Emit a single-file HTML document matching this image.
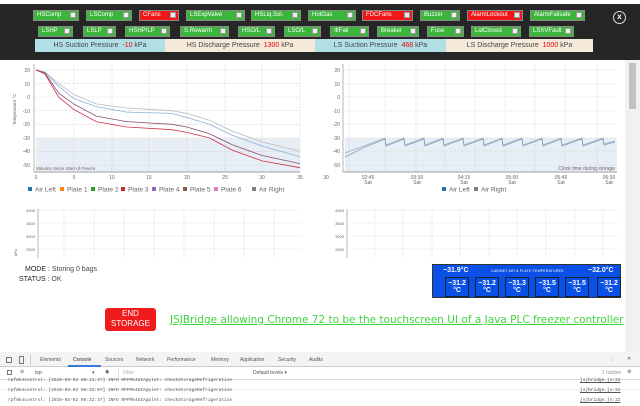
<!DOCTYPE html>
<html><head><meta charset="utf-8"><style>
*{margin:0;padding:0;box-sizing:border-box}
body{width:640px;height:400px;overflow:hidden;background:#fff;font-family:"Liberation Sans",sans-serif;position:relative}
.top{position:absolute;left:0;top:4px;width:640px;height:56px;background:#262626}
.b{position:absolute;height:11px;background:#3cb53c;border:1px solid #888;color:#fff;font-size:6px;line-height:9px;padding-left:3px}
.b.r{background:#f01818}
.b i{position:absolute;right:2px;top:1px;width:6px;height:6px;background:#eee;border:1px solid #999}
.p{position:absolute;top:39px;height:13px;font-size:7px;line-height:13px;text-align:center;color:#444}
.p b{color:#e00;font-weight:normal}
.abs{position:absolute}
.dt{font-size:5px;color:#555}
</style></head><body>
<div class="top"></div>
<div class="abs" style="left:613px;top:11px;width:13px;height:13px;border:1.5px solid #ddd;border-radius:50%;color:#fff;font-size:8px;text-align:center;line-height:10px;font-weight:bold">x</div>
<div class="b" style="left:33px;top:10px;width:46px">HSComp<i></i></div>
<div class="b" style="left:86px;top:10px;width:46px">LSComp<i></i></div>
<div class="b r" style="left:139px;top:10px;width:40px">CFans<i></i></div>
<div class="b" style="left:186px;top:10px;width:59px">LSExpValve<i></i></div>
<div class="b" style="left:251px;top:10px;width:50px">HSLiq.Sol.<i></i></div>
<div class="b" style="left:308px;top:10px;width:48px">HotGas<i></i></div>
<div class="b r" style="left:362px;top:10px;width:51px">FDCFans<i></i></div>
<div class="b" style="left:420px;top:10px;width:40px">Buzzer<i></i></div>
<div class="b r" style="left:467px;top:10px;width:56px">AlarmLockout<i></i></div>
<div class="b" style="left:530px;top:10px;width:55px">AlarmFailsafe<i></i></div>
<div class="b" style="left:38px;top:26px;width:35px">LSHP<i></i></div>
<div class="b" style="left:83px;top:26px;width:33px">LSLP<i></i></div>
<div class="b" style="left:125px;top:26px;width:45px">HSHP/LP<i></i></div>
<div class="b" style="left:180px;top:26px;width:49px">S.Rewarm<i></i></div>
<div class="b" style="left:238px;top:26px;width:37px">HSO/L<i></i></div>
<div class="b" style="left:284px;top:26px;width:37px">LSO/L<i></i></div>
<div class="b" style="left:330px;top:26px;width:39px">ΦFail<i></i></div>
<div class="b" style="left:377px;top:26px;width:42px">Breaker<i></i></div>
<div class="b" style="left:427px;top:26px;width:37px">Fuse<i></i></div>
<div class="b" style="left:471px;top:26px;width:50px">LidClosed<i></i></div>
<div class="b" style="left:529px;top:26px;width:45px">LSXVFault<i></i></div>
<div class="p" style="left:35px;width:130px;background:#b0e0e6">HS Suction Pressure &nbsp;<b>-10</b> kPa</div>
<div class="p" style="left:165px;width:150px;background:#f5e9da">HS Discharge Pressure &nbsp;<b>1300</b> kPa</div>
<div class="p" style="left:315px;width:131px;background:#b0e0e6">LS Suction Pressure &nbsp;<b>468</b> kPa</div>
<div class="p" style="left:446px;width:147px;background:#f5e9da">LS Discharge Pressure &nbsp;<b>1000</b> kPa</div>

<svg class="abs" style="left:0;top:60px" width="640" height="200" viewBox="0 60 640 200" font-family="Liberation Sans" font-size="5" fill="#666">
<rect x="36" y="138" width="264" height="34" fill="#e8eef6"/>
<g stroke="#ccc" stroke-dasharray="1,1" stroke-width="0.6">
<line x1="36" y1="70" x2="300" y2="70"/><line x1="36" y1="83.6" x2="300" y2="83.6"/><line x1="36" y1="97" x2="300" y2="97"/><line x1="36" y1="110.7" x2="300" y2="110.7"/><line x1="36" y1="124.3" x2="300" y2="124.3"/><line x1="36" y1="138" x2="300" y2="138"/><line x1="36" y1="151.4" x2="300" y2="151.4"/><line x1="36" y1="165" x2="300" y2="165"/>
<line x1="74" y1="64" x2="74" y2="172"/><line x1="112" y1="64" x2="112" y2="172"/><line x1="149" y1="64" x2="149" y2="172"/><line x1="187" y1="64" x2="187" y2="172"/><line x1="225" y1="64" x2="225" y2="172"/><line x1="262" y1="64" x2="262" y2="172"/><line x1="300" y1="64" x2="300" y2="172"/>
</g>
<line x1="34" y1="64" x2="34" y2="172" stroke="#999" stroke-width="0.7"/>
<line x1="34" y1="172" x2="300" y2="172" stroke="#bbb" stroke-width="1.5"/>
<g text-anchor="end"><text x="30" y="72">20</text><text x="30" y="86">10</text><text x="30" y="99">0</text><text x="30" y="113">-10</text><text x="30" y="126">-20</text><text x="30" y="140">-30</text><text x="30" y="153">-40</text><text x="30" y="167">-50</text></g>
<g text-anchor="middle"><text x="36" y="179">0</text><text x="74" y="179">5</text><text x="112" y="179">10</text><text x="149" y="179">15</text><text x="187" y="179">20</text><text x="225" y="179">25</text><text x="262" y="179">30</text><text x="300" y="179">35</text><text x="326" y="179">30</text></g>
<text x="36" y="170" font-size="4.5">Minutes Since Start of Freeze</text>
<text transform="translate(16,125) rotate(-90)" font-size="4.5">Temperature °C</text>
<g fill="none" stroke-width="0.8">
<polyline stroke="#bbb" points="36,70 45,72 58.6,83.6 73.7,94.4 96.3,103.9 126.5,108 171.7,110.7 186.8,113.4 209.4,120.2 232,131.1 262.2,141.9 299.9,151.4"/>
<polyline stroke="#8ab0d8" points="36,70 45,72 58.6,86.3 73.7,98.5 96.3,106.6 126.5,112.1 171.7,113.4 186.8,117.5 209.4,124.3 232,135.1 262.2,146 299.9,156.8"/>
<polyline stroke="#8a5070" points="36,70 45,73 58.6,93.1 73.7,103.9 96.3,116.1 126.5,121.6 171.7,124.3 186.8,127 209.4,133.8 232,144.6 262.2,155.5 299.9,163.6"/>
<polyline stroke="#d0304a" points="36,70 45,74 58.6,97.1 73.7,109.4 96.3,121.6 126.5,127 171.7,129.7 186.8,132.4 209.4,137.9 232,150 262.2,160.9 299.9,167.7"/>
</g>
<g font-size="6.6">
<rect x="28" y="187" width="4" height="4" fill="#1f77b4"/><text x="35" y="191.5">Air Left</text>
<rect x="60" y="187" width="4" height="4" fill="#ff7f0e"/><text x="67" y="191.5">Plate 1</text>
<rect x="91" y="187" width="4" height="4" fill="#2ca02c"/><text x="98" y="191.5">Plate 2</text>
<rect x="121" y="187" width="4" height="4" fill="#d62728"/><text x="128" y="191.5">Plate 3</text>
<rect x="152" y="187" width="4" height="4" fill="#9467bd"/><text x="159" y="191.5">Plate 4</text>
<rect x="183" y="187" width="4" height="4" fill="#8c564b"/><text x="190" y="191.5">Plate 5</text>
<rect x="214" y="187" width="4" height="4" fill="#e377c2"/><text x="221" y="191.5">Plate 6</text>
<rect x="252" y="187" width="4" height="4" fill="#7f7f7f"/><text x="259" y="191.5">Air Right</text>
<rect x="442" y="187" width="4" height="4" fill="#1f77b4"/><text x="449" y="191.5">Air Left</text>
<rect x="474" y="187" width="4" height="4" fill="#7f7f7f"/><text x="481" y="191.5">Air Right</text>
</g>
<rect x="345" y="138" width="272" height="34" fill="#e8eef6"/>
<g stroke="#ccc" stroke-dasharray="1,1" stroke-width="0.6">
<line x1="345" y1="70" x2="617" y2="70"/><line x1="345" y1="84" x2="617" y2="84"/><line x1="345" y1="97" x2="617" y2="97"/><line x1="345" y1="111" x2="617" y2="111"/><line x1="345" y1="124" x2="617" y2="124"/><line x1="345" y1="138" x2="617" y2="138"/><line x1="345" y1="151" x2="617" y2="151"/><line x1="345" y1="165" x2="617" y2="165"/>
<line x1="349" y1="64" x2="349" y2="172"/><line x1="385" y1="64" x2="385" y2="172"/><line x1="416" y1="64" x2="416" y2="172"/><line x1="445" y1="64" x2="445" y2="172"/><line x1="475" y1="64" x2="475" y2="172"/><line x1="505" y1="64" x2="505" y2="172"/><line x1="535" y1="64" x2="535" y2="172"/><line x1="565" y1="64" x2="565" y2="172"/><line x1="597" y1="64" x2="597" y2="172"/>
</g>
<line x1="343" y1="64" x2="343" y2="172" stroke="#999" stroke-width="0.7"/>
<line x1="343" y1="172" x2="617" y2="172" stroke="#bbb" stroke-width="1.5"/>
<g text-anchor="end"><text x="340" y="72">20</text><text x="340" y="86">10</text><text x="340" y="99">0</text><text x="340" y="113">-10</text><text x="340" y="126">-20</text><text x="340" y="140">-30</text><text x="340" y="153">-40</text><text x="340" y="167">-50</text></g>
<g text-anchor="middle"><text x="368" y="179">02:45</text><text x="368" y="184">Sat</text><text x="417" y="179">03:30</text><text x="417" y="184">Sat</text><text x="464" y="179">04:15</text><text x="464" y="184">Sat</text><text x="512" y="179">05:00</text><text x="512" y="184">Sat</text><text x="561" y="179">05:45</text><text x="561" y="184">Sat</text><text x="609" y="179">06:30</text><text x="609" y="184">Sat</text></g>
<text x="615" y="170" text-anchor="end">Clock time during storage</text>
<g fill="none" stroke-width="0.8">
<polyline stroke="#aaa" points="345,153 385,138 386,145 404,138 405,145 424,138 425,145 443,138 444,145 463,138 464,145 483,138 484,145 502,138 503,145 522,138 523,145 542,138 543,145 561,138 562,145 582,138 583,145 603,138 604,144 615,141"/>
<polyline stroke="#7aa0cc" points="345,157 365,147 385,139 386,146 404,139 405,146 424,139 425,146 443,139 444,146 463,139 464,146 483,139 484,146 502,139 503,146 522,139 523,146 542,139 543,146 561,139 562,146 582,139 583,146 603,139 604,145 615,142"/>
</g>
<g stroke="#ccc" stroke-dasharray="1,1" stroke-width="0.6">
<line x1="39" y1="210" x2="300" y2="210"/><line x1="39" y1="223" x2="300" y2="223"/><line x1="39" y1="236" x2="300" y2="236"/><line x1="39" y1="249" x2="300" y2="249"/>
<line x1="350" y1="210" x2="617" y2="210"/><line x1="350" y1="223" x2="617" y2="223"/><line x1="350" y1="236" x2="617" y2="236"/><line x1="350" y1="249" x2="617" y2="249"/>
<line x1="64" y1="210" x2="64" y2="258"/><line x1="94" y1="210" x2="94" y2="258"/><line x1="124" y1="210" x2="124" y2="258"/><line x1="154" y1="210" x2="154" y2="258"/><line x1="184" y1="210" x2="184" y2="258"/><line x1="214" y1="210" x2="214" y2="258"/><line x1="244" y1="210" x2="244" y2="258"/><line x1="274" y1="210" x2="274" y2="258"/>
<line x1="375" y1="210" x2="375" y2="258"/><line x1="403" y1="210" x2="403" y2="258"/><line x1="432" y1="210" x2="432" y2="258"/><line x1="460" y1="210" x2="460" y2="258"/><line x1="489" y1="210" x2="489" y2="258"/><line x1="517" y1="210" x2="517" y2="258"/><line x1="546" y1="210" x2="546" y2="258"/><line x1="575" y1="210" x2="575" y2="258"/><line x1="603" y1="210" x2="603" y2="258"/>
</g>
<line x1="38" y1="209" x2="38" y2="258" stroke="#999" stroke-width="0.7"/>
<line x1="347" y1="209" x2="347" y2="258" stroke="#999" stroke-width="0.7"/>
<g text-anchor="end" font-size="4"><text x="35" y="212">4000</text><text x="35" y="225">3500</text><text x="35" y="238">3000</text><text x="35" y="251">2500</text>
<text x="344" y="212">4000</text><text x="344" y="225">3500</text><text x="344" y="238">3000</text><text x="344" y="251">2500</text></g>
<text transform="translate(17,256) rotate(-90)" font-size="4">kPa</text>
</svg>
<div class="abs" style="left:625px;top:60px;width:15px;height:292px;background:#f1f1f1"></div>
<div class="abs" style="left:629px;top:63px;width:7px;height:46px;background:#c1c1c1"></div>

<div class="abs" style="left:25px;top:266px;font-size:7px;color:#222">MODE : <span style="color:#444">Storing 0 bags</span></div>
<div class="abs" style="left:19px;top:276px;font-size:7px;color:#222">STATUS : <span style="color:#444">OK</span></div>

<div class="abs" style="left:432px;top:264px;width:189px;height:34px;background:#0a50e6;border:1px solid #333;color:#fff">
<div class="abs" style="left:10px;top:2px;font-size:7px;font-weight:bold">−31.9°C</div>
<div class="abs" style="left:58px;top:4px;font-size:3.5px;letter-spacing:.2px">CABINET AIR &amp; PLATE TEMPERATURES</div>
<div class="abs" style="left:155px;top:2px;font-size:7px;font-weight:bold">−32.0°C</div>
<div class="abs" style="left:12px;top:12px;width:170px;font-size:7px;font-weight:bold;line-height:7px">
<div class="abs" style="left:0;width:24px;height:20px;border:1px solid #123;text-align:center;padding-top:2px">−31.2<br>°C</div>
<div class="abs" style="left:30px;width:24px;height:20px;border:1px solid #123;text-align:center;padding-top:2px">−31.2<br>°C</div>
<div class="abs" style="left:60px;width:24px;height:20px;border:1px solid #123;text-align:center;padding-top:2px">−31.3<br>°C</div>
<div class="abs" style="left:90px;width:24px;height:20px;border:1px solid #123;text-align:center;padding-top:2px">−31.5<br>°C</div>
<div class="abs" style="left:120px;width:24px;height:20px;border:1px solid #123;text-align:center;padding-top:2px">−31.5<br>°C</div>
<div class="abs" style="left:152px;width:24px;height:20px;border:1px solid #123;text-align:center;padding-top:2px">−31.2<br>°C</div>
</div></div>

<div class="abs" style="left:105px;top:308px;width:51px;height:23px;background:#ee1c1c;border-radius:3px;color:#fff;font-size:8px;text-align:center;line-height:10px;padding-top:1px">END<br>STORAGE</div>
<div class="abs" style="left:170px;top:314px;font-family:'DejaVu Sans',sans-serif;font-size:10.5px;color:#3ed43e;text-decoration:underline;white-space:nowrap">JSJBridge allowing Chrome 72 to be the touchscreen UI of a Java PLC freezer controller</div>

<div class="abs" style="left:0;top:352px;width:640px;height:48px;background:#fff;border-top:1px solid #ccc"></div>
<div class="abs" style="left:0;top:352px;width:640px;height:15px;background:#f3f3f3;border-bottom:1px solid #ccc"></div>
<div class="abs dt" style="left:6px;top:357px;width:6px;height:6px;border:1px solid #777"></div>
<div class="abs dt" style="left:19px;top:356px;width:5px;height:8px;border:1px solid #777"></div>
<div class="abs" style="left:30px;top:355px;width:1px;height:10px;background:#ccc"></div>
<div class="abs dt" style="left:40px;top:357px">Elements</div>
<div class="abs dt" style="left:73px;top:357px;color:#333">Console</div>
<div class="abs" style="left:68px;top:365px;width:33px;height:2px;background:#3879d9"></div>
<div class="abs dt" style="left:105px;top:357px">Sources</div>
<div class="abs dt" style="left:136px;top:357px">Network</div>
<div class="abs dt" style="left:167px;top:357px">Performance</div>
<div class="abs dt" style="left:211px;top:357px">Memory</div>
<div class="abs dt" style="left:240px;top:357px">Application</div>
<div class="abs dt" style="left:278px;top:357px">Security</div>
<div class="abs dt" style="left:309px;top:357px">Audits</div>
<div class="abs dt" style="left:609px;top:356px">⋮</div>
<div class="abs dt" style="left:627px;top:356px">✕</div>
<div class="abs" style="left:0;top:367px;width:640px;height:13px;border-bottom:1px solid #ddd"></div>
<div class="abs dt" style="left:7px;top:370px;width:5px;height:5px;border:1px solid #777"></div>
<div class="abs dt" style="left:20px;top:369px">⊘</div>
<div class="abs dt" style="left:35px;top:370px">top</div>
<div class="abs dt" style="left:92px;top:370px">▾</div>
<div class="abs dt" style="left:105px;top:369px">◉</div>
<div class="abs" style="left:118px;top:369px;width:130px;height:9px;border-left:1px solid #ddd"></div>
<div class="abs dt" style="left:123px;top:370px;color:#aaa">Filter</div>
<div class="abs dt" style="left:253px;top:370px">Default levels ▾</div>
<div class="abs dt" style="left:602px;top:370px;color:#999">1 hidden</div>
<div class="abs dt" style="left:627px;top:369px">⚙</div>
<div class="abs" style="left:0;top:389px;width:640px;height:1px;background:#eee"></div>
<div class="abs" style="left:8px;top:376px;font-family:'Liberation Mono',monospace;font-size:4.5px;color:#555;line-height:10px;white-space:pre">rpfmk4control: [2019-03-02 06:31:37] INFO RPFMk4UIApplet: checkStorageRefrigeration
rpfmk4control: [2019-03-02 06:32:07] INFO RPFMk4UIApplet: checkStorageRefrigeration
rpfmk4control: [2019-03-02 06:32:37] INFO RPFMk4UIApplet: checkStorageRefrigeration</div>
<div class="abs" style="left:580px;top:376px;font-family:'Liberation Mono',monospace;font-size:4.5px;color:#555;line-height:10px;text-decoration:underline">jsjbridge.js:22<br>jsjbridge.js:22<br>jsjbridge.js:22</div>
</body></html>
